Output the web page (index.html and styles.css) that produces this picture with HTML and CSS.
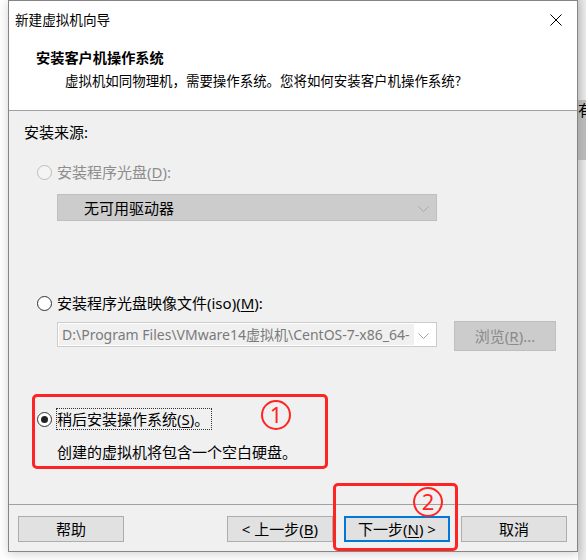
FILE: index.html
```html
<!DOCTYPE html>
<html lang="zh-CN">
<head>
<meta charset="utf-8">
<title>新建虚拟机向导</title>
<link rel="stylesheet" href="styles.css">
</head>
<body>
<div class="behind"><span class="behind-char">有</span></div>
<div class="dialog">
  <div class="header">
    <div class="titlebar">
      <span class="title">新建虚拟机向导</span>
      <svg class="close" width="12" height="12" viewBox="0 0 12 12"><path d="M0.5 0.5 L11.5 11.5 M11.5 0.5 L0.5 11.5" stroke="#000" stroke-width="1" fill="none"/></svg>
    </div>
    <div class="heading">安装客户机操作系统</div>
    <div class="subtitle">虚拟机如同物理机，需要操作系统。您将如何安装客户机操作系统?</div>
  </div>
  <div class="content">
    <div class="section-label">安装来源:</div>
    <div class="radio-row disabled row-1">
      <span class="radio"></span>
      <span class="label">安装程序光盘(<u>D</u>):</span>
    </div>
    <div class="select disabled-select">
      <span class="select-text">无可用驱动器</span>
      <svg class="chev" width="11" height="6" viewBox="0 0 11 6"><path d="M0.5 0.5 L5.5 5.5 L10.5 0.5" stroke="#a8a8a8" fill="none"/></svg>
    </div>
    <div class="radio-row row-2">
      <span class="radio"></span>
      <span class="label">安装程序光盘映像文件(iso)(<u>M</u>):</span>
    </div>
    <div class="iso-row">
      <div class="select iso-select">
        <span class="iso-text">D:\Program Files\VMware14虚拟机\CentOS-7-x86_64-</span>
        <svg class="chev" width="11" height="6" viewBox="0 0 11 6"><path d="M0.5 0.5 L5.5 5.5 L10.5 0.5" stroke="#a8a8a8" fill="none"/></svg>
      </div>
      <div class="browse">浏览(<u>R</u>)...</div>
    </div>
    <div class="radio-row row-3">
      <span class="radio checked"></span>
      <span class="label focus">稍后安装操作系统(<u>S</u>)。</span>
    </div>
    <div class="desc">创建的虚拟机将包含一个空白硬盘。</div>
  </div>
  <div class="footer">
    <div class="btn">帮助</div>
    <div class="btn-group">
      <div class="btn">&lt; 上一步(<u>B</u>)</div>
      <div class="btn default">下一步(<u>N</u>) &gt;</div>
      <div class="btn">取消</div>
    </div>
  </div>
  <div class="mark mark-1"></div>
  <div class="num num-1">1</div>
  <div class="mark mark-2"></div>
  <div class="num num-2">2</div>
</div>
</body>
</html>
```

FILE: styles.css
```css
html, body {
  margin: 0;
  padding: 0;
}
body {
  background: #ffffff;
  width: 586px;
  height: 560px;
  overflow: hidden;
  position: relative;
  font-family: "Noto Sans", "Noto Sans CJK SC", sans-serif;
  color: #000;
}
u {
  text-decoration: underline;
  text-underline-offset: 2px;
  text-decoration-thickness: 1px;
}
.behind {
  position: absolute;
  left: 578px;
  top: 0;
  width: 8px;
  height: 560px;
  background: linear-gradient(to right, #d8d8d8, #ececec);
  overflow: hidden;
}
.behind::before {
  content: "";
  position: absolute;
  left: 0;
  top: 100px;
  width: 8px;
  height: 60px;
  background: #bdbdbd;
}
.behind-char {
  position: absolute;
  left: 0;
  top: 100px;
  font-family: "Noto Sans CJK SC", sans-serif;
  font-size: 15px;
  line-height: 20px;
}
.dialog {
  position: relative;
  margin-left: 8px;
  width: 570px;
  height: 552px;
  box-sizing: border-box;
  border: 1px solid #858585;
  background: #f0f0f0;
  display: flex;
  flex-direction: column;
  box-shadow: 0 2px 10px rgba(0, 0, 0, 0.18);
}
.header {
  background: #ffffff;
  border-bottom: 1px solid #a0a0a0;
  box-sizing: border-box;
  height: 110px;
}
.titlebar {
  height: 36px;
  display: flex;
  align-items: center;
  justify-content: space-between;
  padding: 0 15px 0 6px;
}
.title {
  font-family: "Noto Sans CJK SC", sans-serif;
  font-size: 13.6px;
  line-height: 20px;
}
.close {
  display: block;
  margin-top: 1px;
}
.heading {
  padding-left: 27px;
  margin-top: 10px;
  font-family: "Noto Sans CJK SC", sans-serif;
  font-weight: bold;
  font-size: 14.2px;
  line-height: 20px;
}
.subtitle {
  padding-left: 56px;
  margin-top: 3px;
  font-family: "Noto Sans CJK SC", sans-serif;
  font-size: 13.45px;
  line-height: 20px;
}
.content {
  flex: 1;
  padding: 11px 0 0 15px;
  font-size: 15px;
  line-height: 20px;
}
.section-label {
  height: 20px;
}
.radio-row {
  display: flex;
  align-items: center;
  gap: 5px;
  margin-left: 13px;
  height: 20px;
}
.row-1 { margin-top: 20px; }
.row-2 { margin-top: 72px; }
.row-3 { margin-top: 58px; }
.radio {
  width: 15px;
  height: 15px;
  box-sizing: border-box;
  border-radius: 50%;
  border: 1px solid #333;
  background: #fff;
  position: relative;
  flex: none;
}
.radio.checked::after {
  content: "";
  position: absolute;
  left: 3px;
  top: 3px;
  width: 7px;
  height: 7px;
  border-radius: 50%;
  background: #222;
}
.disabled .radio {
  border-color: #bcbcbc;
  background: #f4f4f4;
}
.disabled .label {
  color: #8d8d8d;
}
.label.focus {
  outline: 1px dotted #333;
  outline-offset: 0;
  padding-right: 2px;
}
.select {
  display: flex;
  align-items: center;
  box-sizing: border-box;
  width: 380px;
  position: relative;
}
.disabled-select {
  margin: 12px 0 0 33px;
  height: 27px;
  background: #cccccc;
  border: 1px solid #bfbfbf;
}
.select-text {
  padding-left: 26px;
  color: #000;
  flex: 1;
}
.chev {
  position: absolute;
  right: 7px;
  top: 50%;
  margin-top: -2px;
}
.iso-row {
  display: flex;
  align-items: flex-start;
  gap: 17px;
  margin: 8px 0 0 33px;
}
.iso-select {
  margin-top: 1px;
  height: 25px;
  background: #ffffff;
  border: 1px solid #cccccc;
  padding-left: 1px;
}
.iso-text {
  display: block;
  width: 355px;
  height: 21px;
  overflow: hidden;
  white-space: nowrap;
  background: #f0f0f0;
  color: #7a7a7a;
  padding-left: 3px;
  box-sizing: border-box;
  font-size: 14px;
  line-height: 21px;
}
.browse {
  width: 102px;
  height: 30px;
  box-sizing: border-box;
  background: #cccccc;
  border: 1px solid #bfbfbf;
  color: #8a8a8a;
  display: flex;
  align-items: center;
  justify-content: center;
}
.desc {
  margin: 13px 0 0 33px;
}
.footer {
  height: 47px;
  border-top: 1px solid #a0a0a0;
  box-sizing: border-box;
  display: flex;
  justify-content: space-between;
  padding: 11px 10px 0 9px;
  font-size: 15px;
}
.btn-group {
  display: flex;
  gap: 11px;
}
.btn {
  width: 106px;
  height: 26px;
  box-sizing: border-box;
  background: #e1e1e1;
  border: 1px solid #adadad;
  display: flex;
  align-items: center;
  justify-content: center;
  line-height: 20px;
}
.btn.default {
  border: 2px solid #0078d7;
}
.mark {
  position: absolute;
  border: 3px solid #ff2424;
  border-radius: 5px;
  box-sizing: border-box;
}
.mark-1 {
  left: 23px;
  top: 393px;
  width: 296px;
  height: 75px;
}
.mark-2 {
  left: 324px;
  top: 482px;
  width: 125px;
  height: 68px;
}
.num {
  position: absolute;
  width: 30px;
  height: 30px;
  box-sizing: border-box;
  border: 2.5px solid #ff2424;
  border-radius: 50%;
  color: #ff2424;
  font-family: "Noto Sans", sans-serif;
  font-size: 22px;
  line-height: 25px;
  text-align: center;
}
.num-1 {
  left: 252px;
  top: 399px;
}
.num-2 {
  left: 404px;
  top: 486px;
}
```
